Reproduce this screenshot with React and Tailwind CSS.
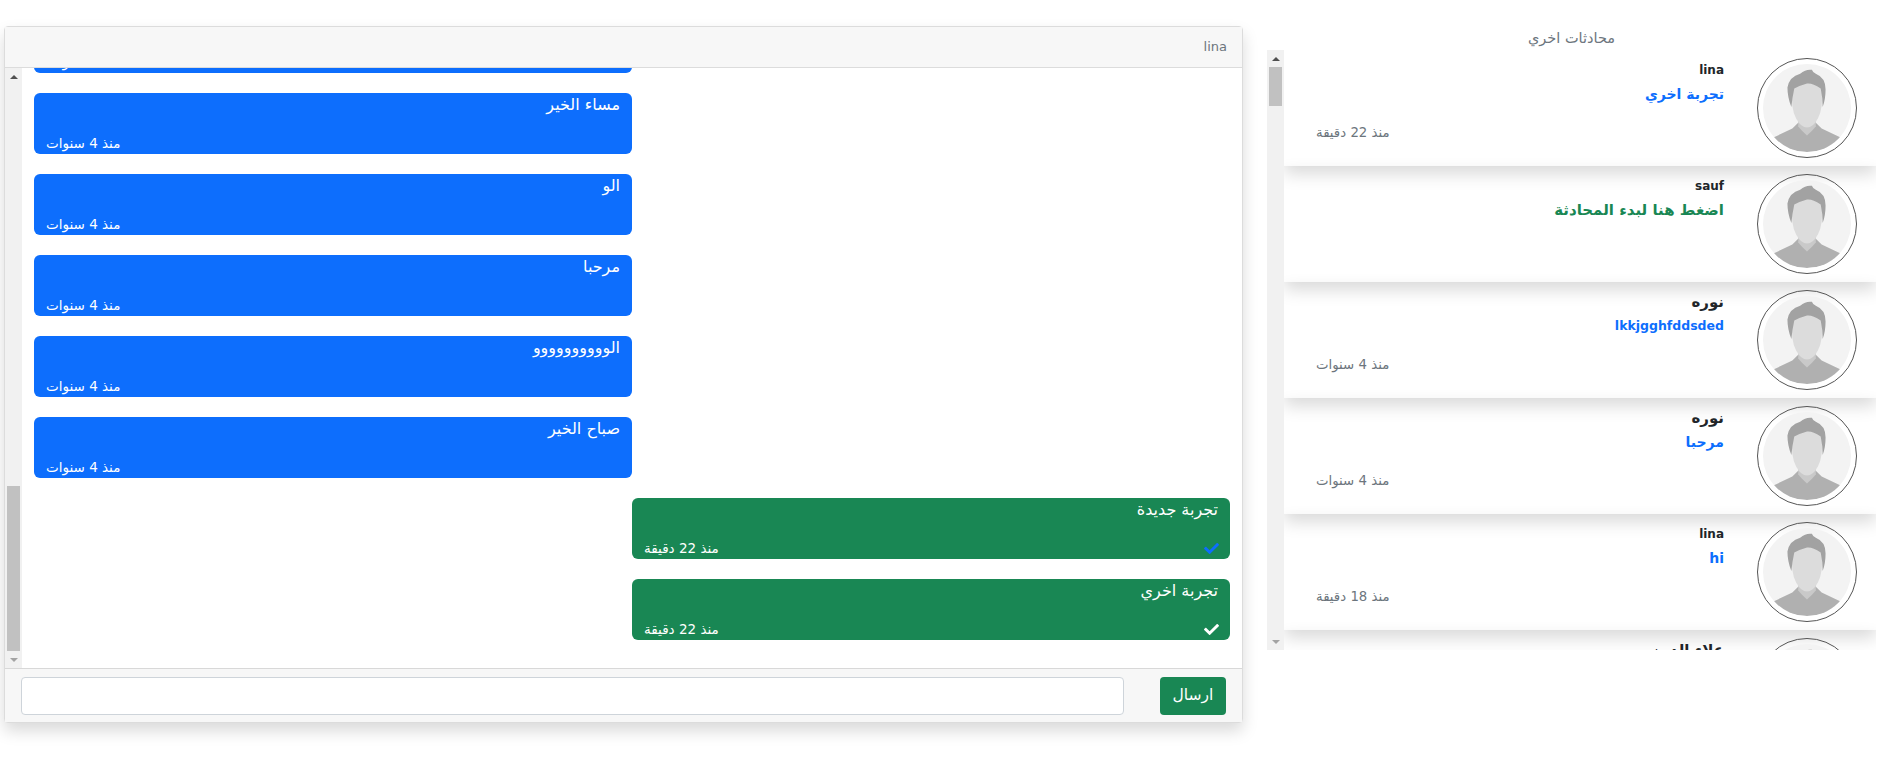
import { FaCheck } from 'react-icons/fa'

const font = { fontFamily: '"DejaVu Sans", "Noto Sans", sans-serif' }

const messages = [
  { text: 'مساء الخير', time: 'منذ 4 سنوات' },
  { text: 'الو', time: 'منذ 4 سنوات' },
  { text: 'مرحبا', time: 'منذ 4 سنوات' },
  { text: 'الوووووووووو', time: 'منذ 4 سنوات' },
  { text: 'صباح الخير', time: 'منذ 4 سنوات' },
  { text: 'تجربة جديدة', time: 'منذ 22 دقيقة', mine: true, check: 'text-[#0d6efd]' },
  { text: 'تجربة اخري', time: 'منذ 22 دقيقة', mine: true, check: 'text-white' },
]

const chats = [
  { name: 'lina', nameSize: 'text-[12px]', text: 'تجربة اخري', time: 'منذ 22 دقيقة', size: 'text-[14px]' },
  { name: 'sauf', nameSize: 'text-[12px]', text: 'اضغط هنا لبدء المحادثة', green: true, size: 'text-[15px]' },
  { name: 'نوره', nameSize: 'text-[15px]', text: 'lkkjgghfddsded', time: 'منذ 4 سنوات', size: 'text-[12.5px]' },
  { name: 'نوره', nameSize: 'text-[15px]', text: 'مرحبا', time: 'منذ 4 سنوات', size: 'text-[14px]' },
  { name: 'lina', nameSize: 'text-[12px]', text: 'hi', time: 'منذ 18 دقيقة', size: 'text-[14px]' },
  { name: 'علاء الدين', nameSize: 'text-[15px]', text: 'مرحبا', time: 'منذ 4 سنوات', size: 'text-[14px]' },
]

function Scrollbar({ className, thumb }) {
  return (
    <div className={`flex shrink-0 flex-col items-center bg-[#f1f1f1] ${className}`}>
      <div className="flex h-[17px] w-full shrink-0 items-center justify-center">
        <div className="h-0 w-0 border-x-[4px] border-b-[4px] border-x-transparent border-b-[#505050]" />
      </div>
      <div className={thumb} />
      <div className="flex h-[17px] w-full shrink-0 items-center justify-center">
        <div className="h-0 w-0 border-x-[4px] border-t-[4px] border-x-transparent border-t-[#a3a3a3]" />
      </div>
    </div>
  )
}

function Avatar() {
  return (
    <div className="h-[100px] w-[100px] shrink-0 rounded-full border border-[#555] p-[5px]">
      <svg viewBox="0 0 90 90" className="h-full w-full rounded-full">
        <rect width="90" height="90" fill="#f3f3f3" />
        <path d="M9 76 L30 66 L36 60 L54 60 L60 66 L81 76 Q66 90 45 90 Q24 90 9 76Z" fill="#b0b0b0" />
        <path d="M36 58 L54 58 L54 64 Q50 69 45 73 Q40 69 36 64Z" fill="#c9c9c9" />
        <path d="M30 24 Q45 14 60 24 Q62 45 56 56 Q51 65 45 65 Q39 65 34 56 Q28 45 30 24Z" fill="#dcdcdc" />
        <path d="M29 44 Q25 34 25 24 Q27 13 38 10 Q44 5 50 6 Q51 9 54 10 Q64 14 64 26 Q64 36 61 44 Q61 34 59 25 Q50 19 45 20 Q38 22 32 25 Q30 34 29 44Z" fill="#a2a2a2" />
      </svg>
    </div>
  )
}

function Bubble({ m }) {
  return (
    <div className={`flex ${m.mine ? 'justify-end' : 'justify-start'}`}>
      <div className={`flex h-[61px] w-[598px] shrink-0 flex-col justify-between rounded-[6px] px-3 pb-[1px] text-white ${m.mine ? 'bg-[#198754]' : 'bg-[#0d6efd]'}`}>
        <div dir="rtl" className="text-[16px] leading-[24px]">{m.text}</div>
        <div className="flex items-center justify-between">
          <span dir="rtl" className="text-[13.5px] leading-[20px]">{m.time}</span>
          {m.mine && <FaCheck size={15} className={`-mr-[1px] ${m.check}`} />}
        </div>
      </div>
    </div>
  )
}

function ChatRow({ c }) {
  return (
    <div className="flex h-[116px] shrink-0 justify-end gap-[33px] pr-[19px] pt-2 shadow-[0_8px_16px_rgba(0,0,0,0.15)]">
      <div className="flex min-w-0 flex-1 flex-col items-end pl-8 pt-[2px]">
        <div dir="rtl" className={`font-bold leading-[20px] text-[#212529] ${c.nameSize}`}>{c.name}</div>
        <div dir="rtl" className={`mt-[4px] font-bold leading-[20px] ${c.size} ${c.green ? 'text-[#198754]' : 'text-[#0d6efd]'}`}>{c.text}</div>
        {c.time && <div dir="rtl" className="mt-[19px] self-start text-[13.3px] leading-[20px] text-[#6c757d]">{c.time}</div>}
      </div>
      <Avatar />
    </div>
  )
}

export default function App() {
  return (
    <div className="flex h-[761px] w-full items-start overflow-hidden bg-white pl-[4px] pr-[14px] pt-[26px]" style={font}>
      {/* chat window */}
      <div className="flex h-[697px] w-[1239px] shrink-0 flex-col rounded border border-[#dcdcdc] bg-white shadow-[0_8px_16px_rgba(0,0,0,0.15)]">
        <div dir="rtl" className="flex h-[41px] shrink-0 items-center border-b border-[#dcdcdc] bg-[#f7f7f7] px-[15px] text-[13px] text-[#6c757d]">lina</div>
        <div className="flex min-h-0 flex-1">
          <Scrollbar className="w-[17px]" thumb="mt-auto h-[165px] w-[13px] bg-[#c1c1c1]" />
          <div className="flex min-w-0 flex-1 flex-col justify-end gap-5 overflow-hidden px-3 pb-[28px]">
            <Bubble m={messages[0]} />
            {messages.map((m, i) => <Bubble key={i} m={m} />)}
          </div>
        </div>
        <div className="flex h-[54px] shrink-0 items-center gap-[36px] border-t border-[#d8d8d8] bg-[#f7f7f7] pl-4 pr-[16px]">
          <input className="h-[38px] min-w-0 flex-1 rounded border border-[#ced4da] bg-white" />
          <button className="h-[38px] w-[66px] shrink-0 rounded bg-[#198754] text-[15.5px] text-white">ارسال</button>
        </div>
      </div>

      {/* recent chats */}
      <div className="ml-[24px] flex min-w-0 flex-1 flex-col">
        <div dir="rtl" className="flex h-[24px] items-center justify-center pt-[2px] text-[14.5px] text-[#6c757d]">محادثات اخري</div>
        <div className="flex h-[600px] overflow-hidden">
          <Scrollbar className="relative z-10 w-[17px]" thumb="mb-auto h-[39px] w-[13px] bg-[#c1c1c1]" />
          <div className="flex min-w-0 flex-1 flex-col overflow-hidden">
            {chats.map((c, i) => <ChatRow key={i} c={c} />)}
          </div>
        </div>
      </div>
    </div>
  )
}
